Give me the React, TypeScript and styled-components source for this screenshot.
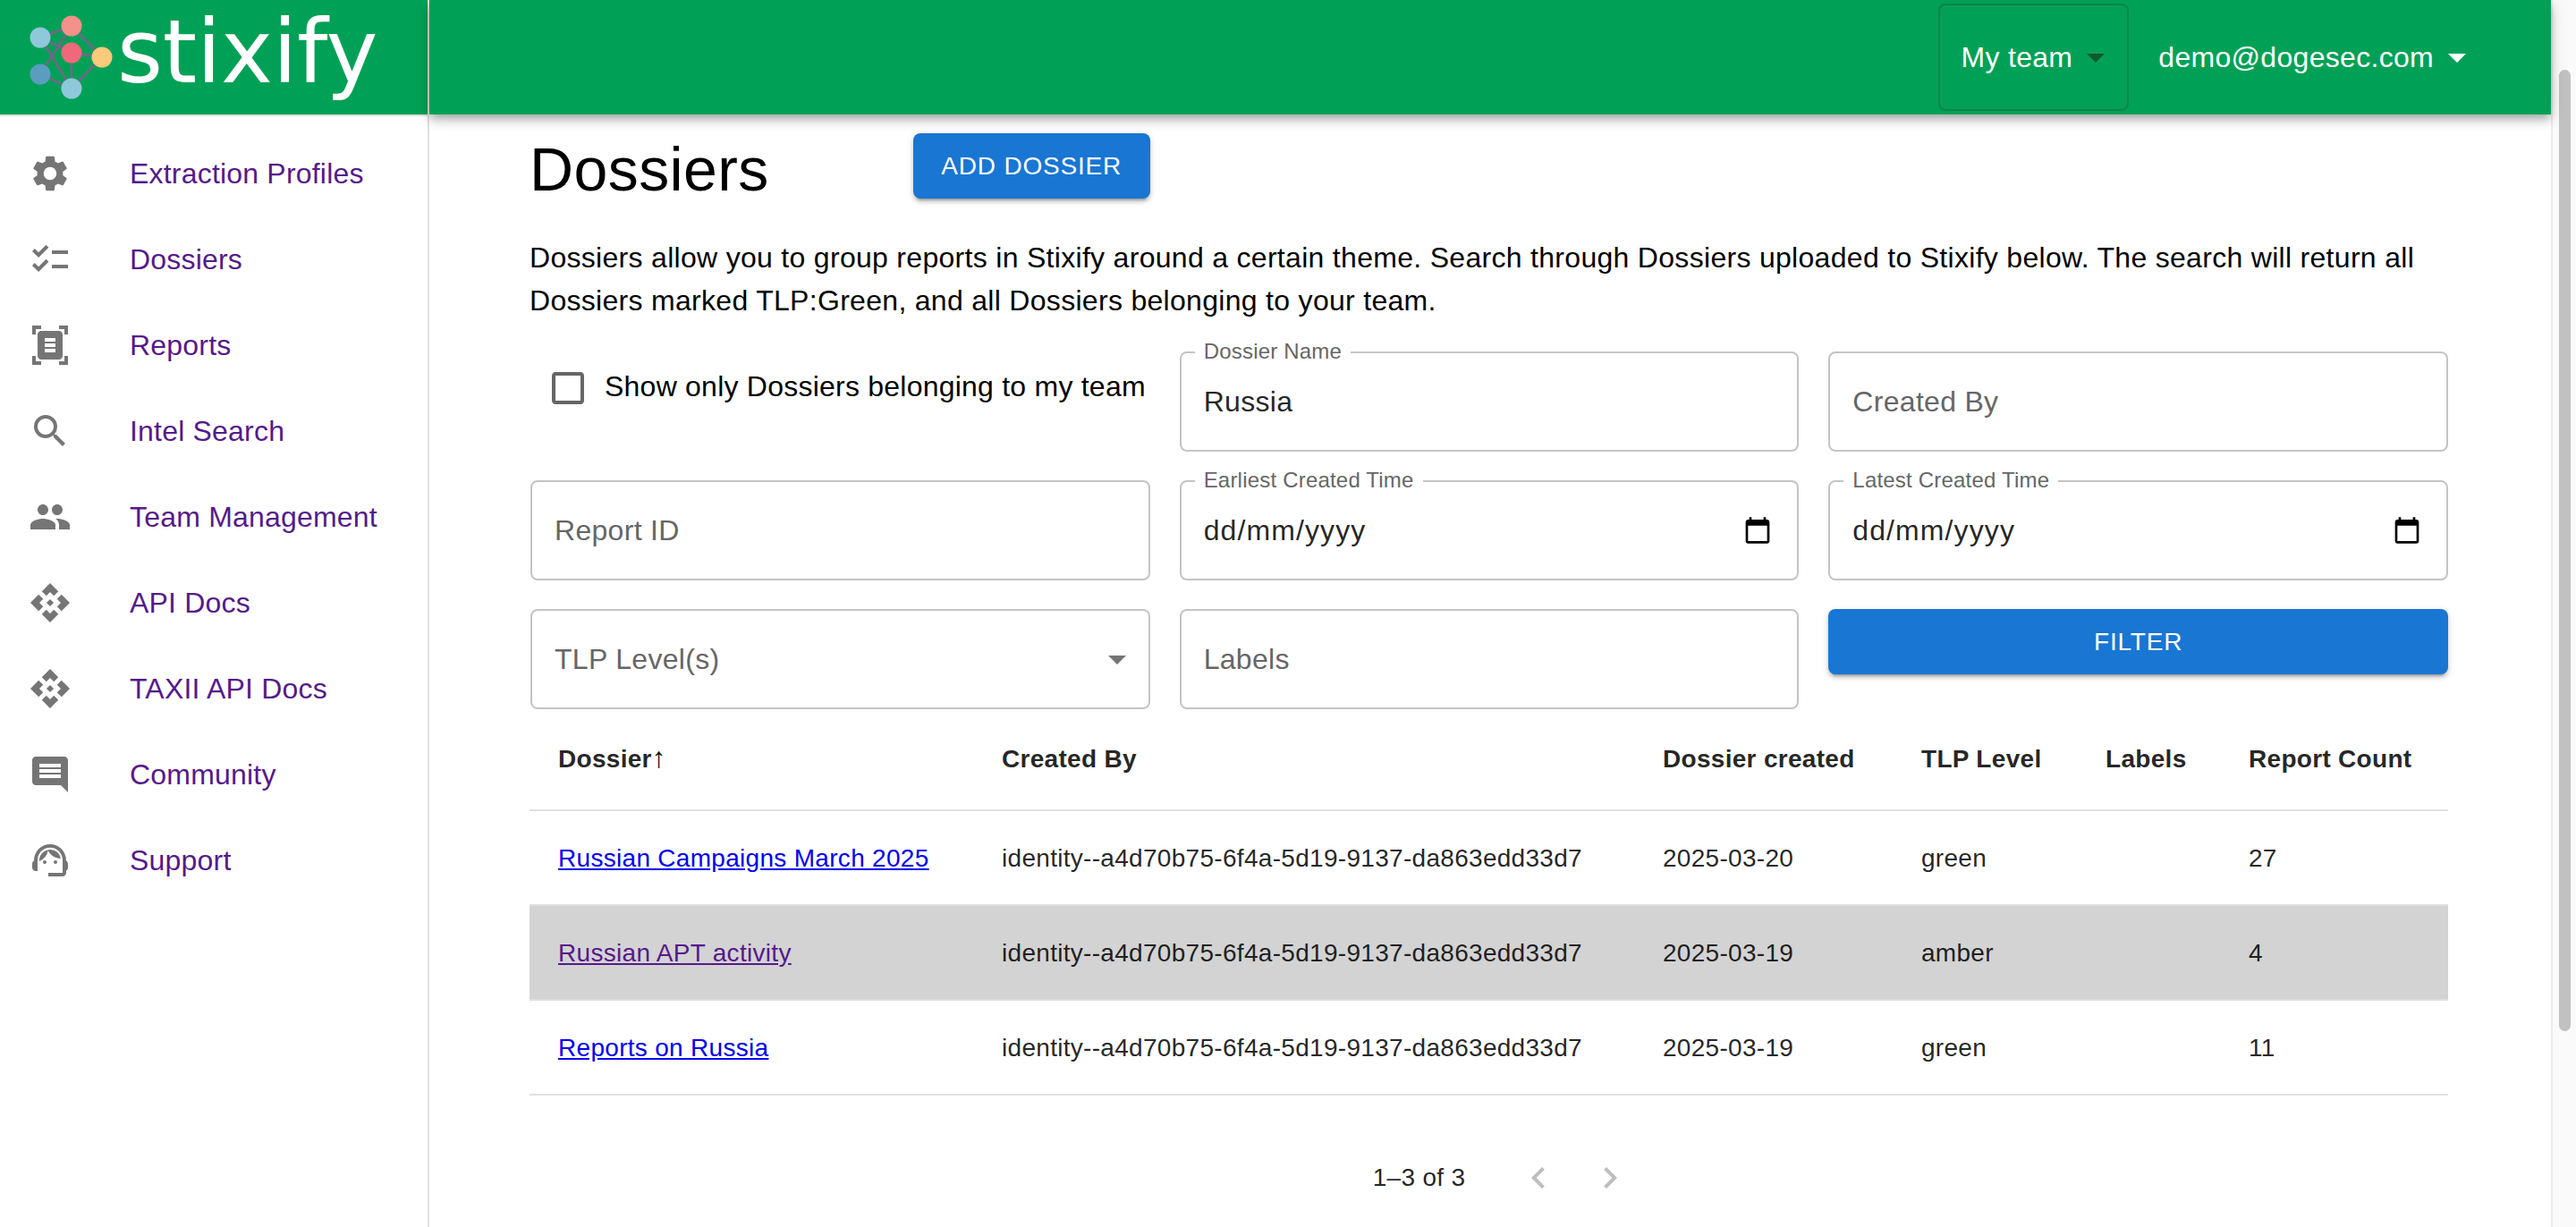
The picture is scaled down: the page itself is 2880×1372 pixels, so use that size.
import React from "react";
import styled, { createGlobalStyle } from "styled-components";
import {
  MdSettings,
  MdChecklist,
  MdDocumentScanner,
  MdSearch,
  MdPeople,
  MdApi,
  MdComment,
  MdSupportAgent,
  MdArrowDropDown,
  MdCheckBoxOutlineBlank,
  MdChevronLeft,
  MdChevronRight,
} from "react-icons/md";

const GlobalStyle = createGlobalStyle`
  html, body {
    margin: 0;
    height: 100%;
    overflow: hidden;
    background: #fff;
    font-family: "Liberation Sans", Arial, sans-serif;
  }
  * {
    box-sizing: border-box;
  }
`;

const Shell = styled.div`
  display: flex;
  height: 100vh;
  overflow: hidden;
`;

const Sidebar = styled.aside`
  width: 480px;
  flex: none;
  border-right: 2px solid #e0e0e0;
  background: #fff;
`;

const LogoBar = styled.div`
  height: 130px;
  border-bottom: 2px solid #e0e0e0;
  background: #00a156;
  display: flex;
  align-items: flex-start;
`;

const LogoWord = styled.span`
  font-family: "DejaVu Sans", sans-serif;
  font-size: 98px;
  line-height: 116px;
  letter-spacing: -0.2px;
  color: #fff;
  margin-left: 1px;
`;

const NavList = styled.nav`
  padding: 16px 0;
`;

const NavItem = styled.a`
  display: flex;
  align-items: center;
  height: 96px;
  padding-left: 32px;
  color: #551a8b;
  font-size: 32px;
  letter-spacing: 0.2px;
  text-decoration: none;
  cursor: pointer;
`;

const NavIcon = styled.span`
  width: 113px;
  flex: none;
  display: flex;
  color: #757575;
  font-size: 48px;
`;

const Content = styled.div`
  flex: 1;
  min-width: 0;
  display: flex;
  flex-direction: column;
`;

const TopBar = styled.header`
  height: 128px;
  flex: none;
  position: relative;
  z-index: 2;
  display: flex;
  align-items: center;
  justify-content: flex-end;
  gap: 33px;
  padding: 0 95px 0 0;
  background: #00a156;
  box-shadow: 0 4px 8px -2px rgba(0, 0, 0, 0.2), 0 8px 10px 0 rgba(0, 0, 0, 0.14),
    0 2px 20px 0 rgba(0, 0, 0, 0.12);
`;

const TeamButton = styled.button<{ $boxed?: boolean }>`
  height: ${(p) => (p.$boxed ? "120px" : "auto")};
  padding: ${(p) => (p.$boxed ? "0 25px 0 24px" : "0")};
  display: flex;
  align-items: center;
  gap: 2px;
  background: transparent;
  border: ${(p) => (p.$boxed ? "2px solid #0c8549" : "none")};
  border-radius: 8px;
  color: #fff;
  font: inherit;
  font-size: 32px;
  letter-spacing: 0.3px;
`;

const Caret = styled.span<{ $dark?: boolean }>`
  display: flex;
  font-size: 48px;
  margin-right: -14px;
  color: ${(p) => (p.$dark ? "#0e5a30" : "#fff")};
`;

const Main = styled.main`
  flex: 1;
  padding: 20px 115px 0 112px;
  color: #000;
`;

const TitleRow = styled.div`
  display: flex;
  align-items: flex-start;
  gap: 161px;
`;

const Title = styled.h1`
  margin: -1px 0 1px;
  font-size: 68px;
  font-weight: 400;
  line-height: 84px;
  letter-spacing: 0.4px;
`;

const PrimaryButton = styled.button<{ $wide?: boolean }>`
  height: 73px;
  width: ${(p) => (p.$wide ? "100%" : "265px")};
  margin-top: ${(p) => (p.$wide ? "0" : "1px")};
  border: none;
  border-radius: 8px;
  background: #1976d2;
  color: #fff;
  font: inherit;
  font-size: 28px;
  letter-spacing: 0.8px;
  box-shadow: 0 6px 2px -4px rgba(0, 0, 0, 0.2), 0 4px 4px 0 rgba(0, 0, 0, 0.14),
    0 2px 10px 0 rgba(0, 0, 0, 0.12);
`;

const Intro = styled.p`
  margin: 32px 0 33px;
  font-size: 32px;
  line-height: 48px;
  letter-spacing: 0.3px;
`;

const FilterGrid = styled.div`
  display: grid;
  grid-template-columns: repeat(3, 1fr);
  column-gap: 33px;
  row-gap: 32px;
  margin-left: 1px;
`;

const CheckRow = styled.label`
  display: flex;
  align-items: flex-start;
  gap: 17px;
  padding: 17px 0 0 18px;
  font-size: 32px;
  line-height: 44px;
  letter-spacing: 0.23px;
  white-space: nowrap;
`;

const CheckIcon = styled.span`
  display: flex;
  font-size: 48px;
  color: #666;
`;

const Field = styled.div`
  position: relative;
  height: 112px;
  display: flex;
  align-items: center;
  padding: 0 28px 0 25px;
  border: 2px solid #c4c4c4;
  border-radius: 8px;
`;

const FieldLabel = styled.span`
  position: absolute;
  left: 15px;
  top: -16px;
  padding: 0 10px;
  background: #fff;
  color: #666;
  font-size: 24px;
  line-height: 28px;
  letter-spacing: 0.2px;
`;

const FieldInput = styled.input`
  flex: 1;
  min-width: 0;
  border: none;
  outline: none;
  padding: 0;
  background: transparent;
  color: rgba(0, 0, 0, 0.87);
  font: inherit;
  font-size: 32px;
  letter-spacing: 0.3px;
  &::placeholder {
    color: #666;
    opacity: 1;
  }
`;

const DateText = styled.span`
  flex: 1;
  color: rgba(0, 0, 0, 0.87);
  font-size: 32px;
  letter-spacing: 1.1px;
`;

const SelectText = styled.span`
  flex: 1;
  color: #666;
  font-size: 32px;
  letter-spacing: 0.3px;
`;

const SelectArrow = styled.span`
  display: flex;
  margin-right: -17px;
  font-size: 48px;
  color: #757575;
`;

const Table = styled.table`
  width: 100%;
  table-layout: fixed;
  border-collapse: separate;
  border-spacing: 0;
  font-size: 28px;
  letter-spacing: 0.3px;
  color: rgba(0, 0, 0, 0.87);
`;

const HeadCell = styled.th<{ $width: number }>`
  width: ${(p) => p.$width}px;
  height: 114px;
  padding: 0 0 0 32px;
  border-bottom: 2px solid #e0e0e0;
  font-weight: 700;
  text-align: left;
  line-height: 48px;
  white-space: nowrap;
`;

const SortArrow = styled.span`
  font-size: 32px;
  font-weight: 400;
  line-height: 0;
  color: #111;
`;

const Row = styled.tr<{ $selected?: boolean }>`
  background: ${(p) => (p.$selected ? "#d3d3d3" : "transparent")};
`;

const Cell = styled.td`
  height: 106px;
  padding: 1px 0 0 32px;
  border-bottom: 2px solid #e0e0e0;
  line-height: 40px;
  white-space: nowrap;
`;

const RowLink = styled.a<{ $visited?: boolean }>`
  color: ${(p) => (p.$visited ? "#551a8b" : "#0000ee")};
  text-decoration: underline;
`;

const Pager = styled.div`
  display: flex;
  align-items: center;
  justify-content: center;
  margin-top: 40px;
  height: 104px;
  padding-left: 46px;
  font-size: 28px;
  letter-spacing: 0.3px;
  color: rgba(0, 0, 0, 0.87);
`;

const PagerText = styled.span`
  margin-right: 42px;
`;

const PagerButton = styled.button`
  width: 80px;
  height: 80px;
  display: flex;
  align-items: center;
  justify-content: center;
  padding: 0;
  border: none;
  background: transparent;
  color: #bdbdbd;
  font-size: 48px;
`;

const ScrollTrack = styled.div`
  width: 28px;
  flex: none;
  padding: 78px 6px 0 7px;
  border-left: 2px solid #ececec;
  background: #fafafa;
`;

const ScrollThumb = styled.div`
  height: 1075px;
  border-radius: 7px;
  background: #c1c1c1;
`;

const navItems = [
  { label: "Extraction Profiles", icon: <MdSettings /> },
  { label: "Dossiers", icon: <MdChecklist /> },
  { label: "Reports", icon: <MdDocumentScanner /> },
  { label: "Intel Search", icon: <MdSearch /> },
  { label: "Team Management", icon: <MdPeople /> },
  { label: "API Docs", icon: <MdApi /> },
  { label: "TAXII API Docs", icon: <MdApi /> },
  { label: "Community", icon: <MdComment /> },
  { label: "Support", icon: <MdSupportAgent /> },
];

const columns = [
  { title: "Dossier", width: 496 },
  { title: "Created By", width: 739 },
  { title: "Dossier created", width: 289 },
  { title: "TLP Level", width: 206 },
  { title: "Labels", width: 160 },
  { title: "Report Count", width: 255 },
];

const identity = "identity--a4d70b75-6f4a-5d19-9137-da863edd33d7";

const rows = [
  { name: "Russian Campaigns March 2025", created: "2025-03-20", tlp: "green", count: 27 },
  { name: "Russian APT activity", created: "2025-03-19", tlp: "amber", count: 4, selected: true },
  { name: "Reports on Russia", created: "2025-03-19", tlp: "green", count: 11 },
];

function LogoMark() {
  return (
    <svg width="130" height="128" viewBox="0 0 130 128" style={{ flex: "none" }}>
      <g stroke="#6b6a85" strokeWidth="3" fill="none">
        <path d="M45 42L80 29L114 64L80 99L45 83L80 29" />
        <path d="M45 42L80 59L114 64M80 59V99M45 42L80 99" />
      </g>
      <circle cx="45" cy="42" r="11.5" fill="#8fc8db" />
      <circle cx="80" cy="29" r="11.5" fill="#f4918a" />
      <circle cx="80" cy="59" r="11.5" fill="#f0697a" />
      <circle cx="114" cy="64" r="11.5" fill="#fdc97a" />
      <circle cx="45" cy="83" r="11.5" fill="#5b9dbe" />
      <circle cx="80" cy="99" r="11.5" fill="#8fc8db" />
    </svg>
  );
}

function CalendarIcon() {
  return (
    <svg width="32" height="32" viewBox="0 0 24 24" fill="#000" style={{ flex: "none" }}>
      <path d="M20 3h-1V1h-2v2H7V1H5v2H4c-1.1 0-2 .9-2 2v16c0 1.1.9 2 2 2h16c1.1 0 2-.9 2-2V5c0-1.1-.9-2-2-2zm0 18H4V8h16v13z" />
    </svg>
  );
}

export default function App() {
  return (
    <Shell>
      <GlobalStyle />
      <Sidebar>
        <LogoBar>
          <LogoMark />
          <LogoWord>stixify</LogoWord>
        </LogoBar>
        <NavList>
          {navItems.map((item) => (
            <NavItem key={item.label}>
              <NavIcon>{item.icon}</NavIcon>
              {item.label}
            </NavItem>
          ))}
        </NavList>
      </Sidebar>

      <Content>
        <TopBar>
          <TeamButton $boxed>
            My team
            <Caret $dark>
              <MdArrowDropDown />
            </Caret>
          </TeamButton>
          <TeamButton>
            demo@dogesec.com
            <Caret>
              <MdArrowDropDown />
            </Caret>
          </TeamButton>
        </TopBar>

        <Main>
          <TitleRow>
            <Title>Dossiers</Title>
            <PrimaryButton>ADD DOSSIER</PrimaryButton>
          </TitleRow>
          <Intro>
            Dossiers allow you to group reports in Stixify around a certain theme. Search through
            Dossiers uploaded to Stixify below. The search will return all Dossiers marked
            TLP:Green, and all Dossiers belonging to your team.
          </Intro>

          <FilterGrid>
            <CheckRow>
              <CheckIcon>
                <MdCheckBoxOutlineBlank />
              </CheckIcon>
              Show only Dossiers belonging to my team
            </CheckRow>
            <Field>
              <FieldLabel>Dossier Name</FieldLabel>
              <FieldInput defaultValue="Russia" />
            </Field>
            <Field>
              <FieldInput placeholder="Created By" />
            </Field>

            <Field>
              <FieldInput placeholder="Report ID" />
            </Field>
            <Field>
              <FieldLabel>Earliest Created Time</FieldLabel>
              <DateText>dd/mm/yyyy</DateText>
              <CalendarIcon />
            </Field>
            <Field>
              <FieldLabel>Latest Created Time</FieldLabel>
              <DateText>dd/mm/yyyy</DateText>
              <CalendarIcon />
            </Field>

            <Field>
              <SelectText>TLP Level(s)</SelectText>
              <SelectArrow>
                <MdArrowDropDown />
              </SelectArrow>
            </Field>
            <Field>
              <FieldInput placeholder="Labels" />
            </Field>
            <PrimaryButton $wide>FILTER</PrimaryButton>
          </FilterGrid>

          <Table>
            <thead>
              <tr>
                {columns.map((col, index) => (
                  <HeadCell key={col.title} $width={col.width}>
                    {col.title}
                    {index === 0 && <SortArrow>↑</SortArrow>}
                  </HeadCell>
                ))}
              </tr>
            </thead>
            <tbody>
              {rows.map((row) => (
                <Row key={row.name} $selected={row.selected}>
                  <Cell>
                    <RowLink href="#" $visited={row.selected}>
                      {row.name}
                    </RowLink>
                  </Cell>
                  <Cell>{identity}</Cell>
                  <Cell>{row.created}</Cell>
                  <Cell>{row.tlp}</Cell>
                  <Cell />
                  <Cell>{row.count}</Cell>
                </Row>
              ))}
            </tbody>
          </Table>

          <Pager>
            <PagerText>1–3 of 3</PagerText>
            <PagerButton>
              <MdChevronLeft />
            </PagerButton>
            <PagerButton>
              <MdChevronRight />
            </PagerButton>
          </Pager>
        </Main>
      </Content>

      <ScrollTrack>
        <ScrollThumb />
      </ScrollTrack>
    </Shell>
  );
}
